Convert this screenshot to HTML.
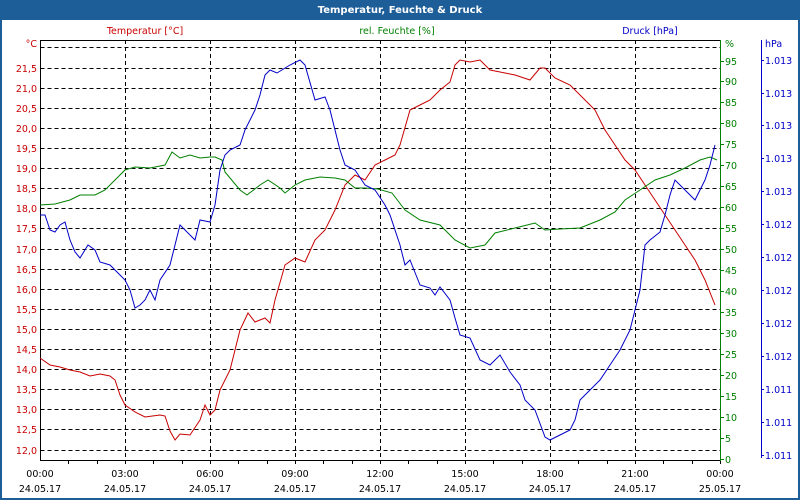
<!DOCTYPE html>
<html><head><meta charset="utf-8"><style>
body{margin:0;width:800px;height:500px;overflow:hidden;background:#fff;font-family:Tahoma,"DejaVu Sans","Liberation Sans",sans-serif}
</style></head><body>
<svg width="800" height="500" xmlns="http://www.w3.org/2000/svg" font-family="'DejaVu Sans','Liberation Sans',sans-serif" font-size="9.5">
<rect x="0" y="0" width="800" height="500" fill="#1e5e98"/>
<rect x="2" y="20" width="796" height="478" fill="#fff"/>
<text x="400" y="13" text-anchor="middle" fill="#fff" font-weight="bold" font-size="10">Temperatur, Feuchte &amp; Druck</text>
<text x="145" y="34" text-anchor="middle" fill="#c80000">Temperatur [°C]</text>
<text x="397" y="34" text-anchor="middle" fill="#008000">rel. Feuchte [%]</text>
<text x="650" y="34" text-anchor="middle" fill="#0000c8">Druck [hPa]</text>
<g stroke="#000" stroke-dasharray="4,3" stroke-width="1">
<path d="M40.5 47.5H720M40.5 68.5H720M40.5 88.5H720M40.5 108.5H720M40.5 128.5H720M40.5 148.5H720M40.5 168.5H720M40.5 188.5H720M40.5 208.5H720M40.5 228.5H720M40.5 249.5H720M40.5 269.5H720M40.5 289.5H720M40.5 309.5H720M40.5 329.5H720M40.5 349.5H720M40.5 369.5H720M40.5 389.5H720M40.5 409.5H720M40.5 429.5H720M40.5 450.5H720"/>
<path d="M125.5 40V460M210.5 40V460M295.5 40V460M380.5 40V460M465.5 40V460M550.5 40V460M635.5 40V460"/>
</g>
<path d="M40.5 40V460.5H720M40 40.5H720" stroke="#000" fill="none"/>
<path d="M68.5 460v4M97.5 460v4M125.5 460v4M153.5 460v4M182.5 460v4M210.5 460v4M238.5 460v4M267.5 460v4M295.5 460v4M323.5 460v4M352.5 460v4M380.5 460v4M408.5 460v4M437.5 460v4M465.5 460v4M493.5 460v4M522.5 460v4M550.5 460v4M578.5 460v4M607.5 460v4M635.5 460v4M663.5 460v4M692.5 460v4M720.5 460v4" stroke="#000"/>
<path d="M720.5 40V461" stroke="#008000"/>
<path d="M720 61.5h4M720 81.5h4M720 102.5h4M720 123.5h4M720 144.5h4M720 165.5h4M720 186.5h4M720 207.5h4M720 228.5h4M720 249.5h4M720 270.5h4M720 291.5h4M720 312.5h4M720 333.5h4M720 354.5h4M720 375.5h4M720 396.5h4M720 417.5h4M720 438.5h4M720 459.5h4" stroke="#008000"/>
<path d="M761.5 40V458" stroke="#0000c8"/>
<path d="M761 60.5h3M761 93.5h3M761 125.5h3M761 158.5h3M761 191.5h3M761 224.5h3M761 257.5h3M761 290.5h3M761 323.5h3M761 356.5h3M761 389.5h3M761 422.5h3M761 455.5h3" stroke="#0000c8"/>
<g fill="#c80000" text-anchor="end">
<text x="37" y="47">°C</text><text x="37" y="72">21,5</text><text x="37" y="92">21,0</text><text x="37" y="112">20,5</text><text x="37" y="132">20,0</text><text x="37" y="152">19,5</text><text x="37" y="172">19,0</text><text x="37" y="192">18,5</text><text x="37" y="212">18,0</text><text x="37" y="232">17,5</text><text x="37" y="253">17,0</text><text x="37" y="273">16,5</text><text x="37" y="293">16,0</text><text x="37" y="313">15,5</text><text x="37" y="333">15,0</text><text x="37" y="353">14,5</text><text x="37" y="373">14,0</text><text x="37" y="393">13,5</text><text x="37" y="413">13,0</text><text x="37" y="433">12,5</text><text x="37" y="454">12,0</text>
</g>
<g fill="#008000">
<text x="725" y="47">%</text><text x="725" y="65">95</text><text x="725" y="85">90</text><text x="725" y="106">85</text><text x="725" y="127">80</text><text x="725" y="148">75</text><text x="725" y="169">70</text><text x="725" y="190">65</text><text x="725" y="211">60</text><text x="725" y="232">55</text><text x="725" y="253">50</text><text x="725" y="274">45</text><text x="725" y="295">40</text><text x="725" y="316">35</text><text x="725" y="337">30</text><text x="725" y="358">25</text><text x="725" y="379">20</text><text x="725" y="400">15</text><text x="725" y="421">10</text><text x="725" y="442">5</text><text x="725" y="463">0</text>
</g>
<g fill="#0000c8">
<text x="765" y="47">hPa</text>
<text x="765" y="64">1.013</text><text x="765" y="97">1.013</text><text x="765" y="129">1.013</text><text x="765" y="162">1.013</text><text x="765" y="195">1.013</text><text x="765" y="228">1.012</text><text x="765" y="261">1.012</text><text x="765" y="294">1.012</text><text x="765" y="327">1.012</text><text x="765" y="360">1.012</text><text x="765" y="393">1.011</text><text x="765" y="426">1.011</text><text x="765" y="459">1.011</text>
</g>
<g fill="#000" text-anchor="middle">
<text x="40" y="477">00:00</text><text x="125" y="477">03:00</text><text x="210" y="477">06:00</text><text x="295" y="477">09:00</text><text x="380" y="477">12:00</text><text x="465" y="477">15:00</text><text x="550" y="477">18:00</text><text x="635" y="477">21:00</text><text x="720" y="477">00:00</text>
<text x="40" y="492">24.05.17</text><text x="125" y="492">24.05.17</text><text x="210" y="492">24.05.17</text><text x="295" y="492">24.05.17</text><text x="380" y="492">24.05.17</text><text x="465" y="492">24.05.17</text><text x="550" y="492">24.05.17</text><text x="635" y="492">24.05.17</text><text x="720" y="492">25.05.17</text>
</g>
<polyline fill="none" stroke="#c80000" points="40,358 50,365 60,367 70,370 80,372 90,376 100,374 110,376 115,380 120,395 125,405 135,412 145,417 160,415 165,416 170,431 175,440 180,434 190,435 200,420 205,405 210,415 215,410 220,390 230,370 240,330 248,313 255,322 265,318 270,323 275,300 285,265 295,258 305,262 315,240 325,230 335,210 345,185 355,175 365,180 375,165 385,160 395,155 400,145 410,110 420,105 430,100 440,90 450,82 455,65 460,60 470,62 480,60 490,70 500,72 515,75 530,80 540,68 545,68 555,78 570,85 585,100 595,110 605,130 615,145 625,160 635,170 645,185 655,200 665,215 675,230 685,245 695,260 705,280 715,305"/>
<polyline fill="none" stroke="#008000" points="40,205 55,204 70,200 80,195 95,195 105,190 115,180 125,170 135,167 150,168 165,165 172,152 180,158 190,155 200,158 210,157 215,157 222,160 225,172 240,190 247,195 260,185 268,180 280,188 285,193 295,185 305,180 320,177 335,178 345,180 355,188 365,188 378,189 392,193 405,210 420,220 440,225 455,240 470,248 485,245 495,233 515,228 535,223 545,230 560,229 580,228 600,220 615,212 625,200 640,190 655,180 670,175 685,168 700,160 710,157 717,160"/>
<polyline fill="none" stroke="#0000c8" points="40,215 45,215 50,230 55,232 60,225 65,222 70,240 75,252 80,258 88,245 95,250 100,262 110,265 120,275 125,280 130,290 135,308 140,305 145,300 150,290 155,300 160,280 170,265 180,225 190,235 195,240 200,220 210,222 215,205 220,170 225,155 230,150 240,145 245,130 255,110 260,95 265,75 270,70 277,73 290,65 300,60 305,65 315,100 325,97 330,110 340,150 345,165 355,170 365,185 375,190 385,205 390,215 400,245 405,265 410,260 420,285 430,288 435,295 440,287 450,300 455,318 460,335 470,338 480,360 490,365 500,355 510,372 520,385 525,400 535,410 545,437 550,440 560,435 570,430 575,420 580,400 590,390 600,380 610,365 620,350 630,330 640,290 645,245 650,240 660,232 665,215 670,195 675,180 685,190 695,200 705,180 710,165 715,145"/>
</svg>
</body></html>
